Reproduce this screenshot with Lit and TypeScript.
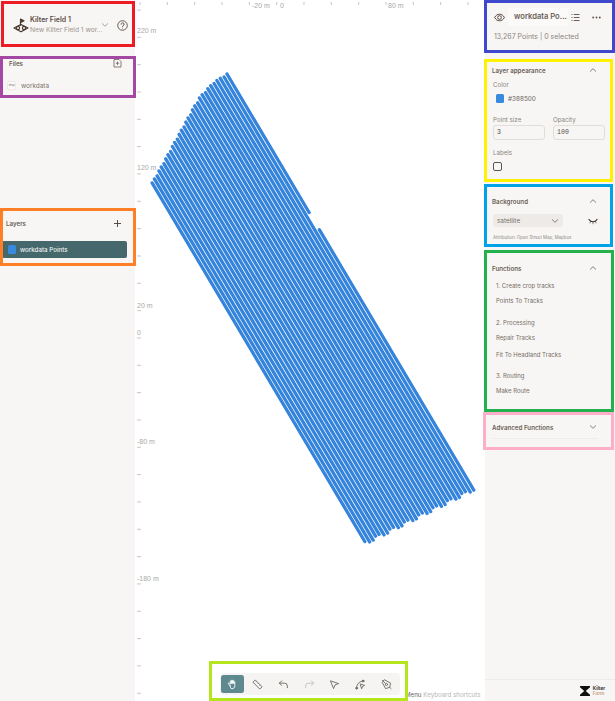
import { LitElement, html, css, svg } from "lit";
import { customElement } from "lit/decorators.js";

const chevron = (up: boolean) => html`<svg class="chev" viewBox="0 0 10 10"><path d=${up ? "M2.3 6.3 5 3.7 7.7 6.3" : "M2.3 3.7 5 6.3 7.7 3.7"} fill="none" stroke="currentColor" stroke-width=".8" stroke-linecap="round" stroke-linejoin="round"/></svg>`;

const NX = 0.86, NY = -0.51, AX = 0.51, AY = 0.86;
const stag: [number, number][] = [[0, 0], [16, 0.6], [35, 6], [46, 12], [100, 44], [120, 55.5]];
function sOf(d: number) {
  for (let i = 1; i < stag.length; i++) {
    if (d <= stag[i][0]) {
      const [a, b] = stag[i - 1];
      const [c, e] = stag[i];
      return b + ((d - a) / (c - a)) * (e - b);
    }
  }
  return 55.5;
}
function tracks() {
  const out = [];
  for (let i = 0; i <= 30; i++) {
    const d = i * 4;
    const bx = 227 - NX * d, by = 74 - NY * d;
    const s = sOf(d) + (i % 3 === 1 ? 1 : 0);
    const L = 484 - (9 * d) / 120 + (i % 4 < 2 ? 0 : -2.5);
    const p = (t: number) => `${(bx + AX * t).toFixed(1)} ${(by + AY * t).toFixed(1)}`;
    if (i === 0) {
      out.push(svg`<path d="M${p(s)}L${p(161)}M${p(181)}L${p(L)}"/>`);
    } else {
      out.push(svg`<path d="M${p(s)}L${p(L)}"/>`);
    }
  }
  return out;
}

const xTicks = Array.from({ length: 13 }, (_, i) => 140 + i * 27.33);
const yTicks = Array.from({ length: 26 }, (_, i) => 10 + i * 27.33);
const xLabels: [string, number][] = [["-20 m", 252], ["0", 280], ["80 m", 388]];
const yLabels: [string, number][] = [["220 m", 33], ["120 m", 170], ["20 m", 308], ["0", 335], ["-80 m", 444], ["-180 m", 581]];

@customElement("app-root")
export class AppRoot extends LitElement {
  static styles = css`
    :host { display: block; width: 615px; height: 701px; position: relative; overflow: hidden; background: #fff;
      font-family: "Inter", "Noto Sans", sans-serif; color: #6a625c; font-size: 6.2px; }
    .app { display: flex; height: 701px; }
    .left { width: 135px; flex: none; background: #f8f6f4; display: flex; flex-direction: column; }
    .map { flex: 1; position: relative; min-width: 0; }
    .map svg.canvas { display: block; width: 350px; height: 701px; }
    .right { width: 130px; flex: none; background: #f8f6f4; display: flex; flex-direction: column; border-bottom-right-radius: 4px; }

    .proj { height: 50px; display: flex; align-items: center; padding: 0 7px 0 13px; box-sizing: border-box; }
    .proj .logo { width: 16px; height: 15px; flex: none; color: #4a3b32; }
    .proj .names { margin-left: 1px; flex: 1; min-width: 0; }
    .proj .t { font-size: 7px; font-weight: 600; color: #5a4c44; line-height: 10px; }
    .proj .s { font-size: 6.6px; color: #98938e; line-height: 10px; white-space: nowrap; }
    .chev { width: 10px; height: 10px; flex: none; color: #6a625c; display: block; }
    .proj .chev { color: #8f8a85; }
    .help { width: 11px; height: 11px; margin-left: 7px; flex: none; color: #4a3b32; }

    .secHead { display: flex; align-items: center; justify-content: space-between; font-weight: 600; font-size: 6.2px; color: #6a5e56; }
    .files { padding: 8px 13px 0 9px; height: 160px; box-sizing: border-box; }
    .fileRow { display: flex; align-items: center; gap: 5px; margin: 13px 0 0 -2px; font-size: 6.4px; color: #7a736d; }
    .fileIcon { width: 9px; height: 9px; border-radius: 2px; background: #fdfcfb; border: 1px solid #ece9e6; box-sizing: border-box;
      font-size: 3.5px; text-align: center; line-height: 7px; color: #666; }
    .addIcon { width: 9px; height: 10px; color: #6a625c; display: block; }
    .layers { padding: 9px 0 0 2px; }
    .layers .secHead { padding: 0 13px 0 4px; }
    .plus { width: 9px; height: 9px; color: #4a3b32; display: block; }
    .layerRow { margin-top: 13px; width: 125px; height: 17px; background: #44686b; border-radius: 2px; display: flex; align-items: center;
      color: #eef2f2; font-size: 6.2px; font-weight: 500; padding-left: 6px; box-sizing: border-box; gap: 4px; }
    .sw { width: 8px; height: 9px; background: #388ade; border-radius: 1.5px; flex: none; }

    .lhead { height: 52px; box-sizing: border-box; padding: 8px 0 0 9px; }
    .lhead .top { display: flex; align-items: center; height: 18px; }
    .eye { width: 11px; height: 11px; color: #4a3b32; flex: none; display: block; }
    .lname { margin-left: 3px; width: 60px; height: 18px; box-sizing: border-box; padding-left: 6px; line-height: 18px; font-size: 7.6px; font-weight: 600; color: #6a5e56;
      background: #fbfaf8; border-radius: 3px; white-space: nowrap; }
    .ic { width: 9px; height: 9px; color: #5a4c44; display: block; flex: none; }
    .ic.list { margin-left: 3px; }
    .ic.dots { margin-left: 12px; }
    .count { margin-top: 6px; color: #8a837d; font-size: 7px; line-height: 10px; white-space: nowrap; }

    .sec { padding: 0 17px 0 7px; box-sizing: border-box; }
    .sec .secHead { height: 10px; }
    .appearance { height: 133px; padding-top: 13px; }
    .label { font-size: 6.2px; color: #8a837d; line-height: 10px; }
    .colorLabel { margin: 5px 0 0 1px; }
    .color { margin: 4px 0 0 4px; display: flex; align-items: center; gap: 4px; font-size: 6.4px; color: #6a625c; height: 9px; }
    .grid { display: grid; grid-template-columns: 52px 52px; column-gap: 8px; margin: 12px 0 0 1px; }
    .input { height: 15px; border: 1px solid #e0ddda; border-radius: 3px; box-sizing: border-box; padding-left: 3px; line-height: 13px;
      font-family: "Liberation Mono", monospace; font-size: 6.6px; color: #55504c; }
    .check { width: 9px; height: 9px; border: 1px solid #5a5550; border-radius: 2px; box-sizing: border-box; margin-top: 4px; }
    .labelsBox { margin: 8px 0 0 1px; }

    .bg { height: 66px; padding-top: 11px; }
    .bgRow { display: flex; align-items: center; margin: 8px 0 0 1px; }
    .select { width: 70px; height: 13px; background: #edeae7; border-radius: 3px; display: flex; align-items: center; justify-content: space-between;
      padding: 0 3px 0 4px; box-sizing: border-box; color: #7a736d; font-size: 6.4px; }
    .lash { width: 10px; height: 8px; margin-left: 25px; color: #3a2e26; display: block; flex: none; }
    .attr { margin: 8px 0 0 1px; font-size: 4.4px; color: #8f8a85; white-space: nowrap; line-height: 6px; }

    .fn { height: 160px; padding-top: 12px; }
    .fnList { padding-left: 4px; font-size: 6px; color: #756d67; white-space: nowrap; }
    .fnList div { height: 10px; line-height: 10px; }
    .fnList .g0 { margin-top: 8px; }
    .fnList .g1 { margin-top: 5px; }
    .fnList .g2 { margin-top: 12px; }
    .fnList .g3 { margin-top: 7px; }
    .fnList .g4 { margin-top: 11px; }
    .adv { padding-top: 11px; padding-right: 17px; }
    .adv .inner { padding-bottom: 6px; border-bottom: 1px solid #efedea; }
    .spacer { flex: 1; }
    .foot { height: 21px; border-top: 1px solid #ecebe8; display: flex; align-items: center; justify-content: flex-end; padding-right: 10px; gap: 3px; }
    .hour { width: 10px; height: 10px; display: block; }
    .kf { font-size: 4.6px; line-height: 5px; font-weight: 700; color: #333; }
    .kf span { display: block; }
    .kf .farm { color: #c9a98d; }

    .toolbar { position: absolute; left: 85px; top: 673px; width: 180px; height: 22px; background: #f6f4f2; border-radius: 4px;
      display: flex; align-items: center; padding-left: 1px; box-sizing: border-box; }
    .tool { width: 25.7px; height: 18px; display: flex; align-items: center; justify-content: center; color: #6f6a66; flex: none; }
    .tool svg { width: 11px; height: 11px; display: block; }
    .tool.on { width: 23px; background: #5e8a8f; color: #fff; border-radius: 2.5px; margin-right: 1px; }
    .tool.off { color: #c4c1be; }
    .hint { position: absolute; left: 270px; top: 690px; font-size: 6.2px; color: #b8b5b2; white-space: nowrap; line-height: 9px; }
    .hint b { font-weight: 400; color: #6a625c; }

    .ann { position: absolute; box-sizing: border-box; border: 3px solid; pointer-events: none; }
    .a1 { left: 1px; top: 1px; width: 134px; height: 46px; border-color: #ed1c24; }
    .a2 { left: 0; top: 56px; width: 136px; height: 42px; border-color: #a349a4; }
    .a3 { left: 0; top: 208px; width: 136px; height: 58px; border-color: #ff7f27; }
    .a4 { left: 484px; top: 0; width: 131px; height: 53px; border-color: #3f48cc; }
    .a5 { left: 484px; top: 59px; width: 129px; height: 123px; border-color: #fff200; }
    .a6 { left: 484px; top: 184px; width: 129px; height: 63px; border-color: #00a2e8; }
    .a7 { left: 484px; top: 250px; width: 130px; height: 162px; border-color: #22b14c; }
    .a8 { left: 483px; top: 412px; width: 131px; height: 38px; border-color: #ffaec9; }
    .a9 { left: 209px; top: 661px; width: 199px; height: 40px; border-color: #b5e61d; }
  `;

  render() {
    return html`<div class="app">
      <div class="left">
        <div class="proj">
          <svg class="logo" viewBox="0 0 16 15" fill="none" stroke="currentColor" stroke-width="1.2">
            <path d="M7.5 8V1l3.5 1.8-3.5 1.8" fill="currentColor" stroke-linejoin="round"/>
            <path d="M8 6.5 15 10 8 13.8 1 10Z" stroke-linejoin="round"/>
            <circle cx="5" cy="10" r="1.6"/><circle cx="11" cy="10" r="1.6"/>
          </svg>
          <div class="names"><div class="t">Kilter Field 1</div><div class="s">New Kilter Field 1 wor...</div></div>
          ${chevron(false)}
          <svg class="help" viewBox="0 0 12 12" fill="none" stroke="currentColor"><circle cx="6" cy="6" r="5.2" stroke-width=".9"/>
            <path d="M4.5 4.7A1.6 1.6 0 1 1 6.6 6.2C6.1 6.5 6 6.8 6 7.4" stroke-width=".9" stroke-linecap="round"/><circle cx="6" cy="9" r=".5" fill="currentColor" stroke="none"/></svg>
        </div>
        <div class="files">
          <div class="secHead">Files
            <svg class="addIcon" viewBox="0 0 9 10" fill="none" stroke="currentColor" stroke-width=".8"><path d="M1 1.5h5l2 2V9H1Z" stroke-linejoin="round"/><path d="M4.5 3.5v3.5M2.8 5.2h3.4"/></svg>
          </div>
          <div class="fileRow"><span class="fileIcon">shp</span>workdata</div>
        </div>
        <div class="layers">
          <div class="secHead">Layers
            <svg class="plus" viewBox="0 0 9 9" fill="none" stroke="currentColor" stroke-width=".9"><path d="M4.5 1v7M1 4.5h7"/></svg>
          </div>
          <div class="layerRow"><span class="sw"></span>workdata Points</div>
        </div>
      </div>

      <div class="map">
        <svg class="canvas" viewBox="135 0 350 701">
          <g stroke="#c8c8c8" stroke-width="1">
            ${xTicks.map((x) => svg`<line x1=${x} x2=${x} y1="2" y2="5"/>`)}
            ${yTicks.map((y) => svg`<line x1="137" x2="141" y1=${y} y2=${y}/>`)}
          </g>
          <g fill="#a8a8a8" font-family="Liberation Sans, Arial, sans-serif" font-size="7">
            ${xLabels.map(([t, x]) => svg`<text x=${x} y="7.5">${t}</text>`)}
            ${yLabels.map(([t, y]) => svg`<text x="137" y=${y}>${t}</text>`)}
          </g>
          <g fill="none" stroke="#3584dc" stroke-width="3.3" stroke-linecap="round">${tracks()}</g>
        </svg>
        <div class="toolbar">
          <div class="tool on"><svg viewBox="0 0 12 12" fill="none" stroke="currentColor" stroke-width="1" stroke-linejoin="round" stroke-linecap="round"><path d="M3.2 7 1.6 5.4c-.6-.7.3-1.5 1-.9L3.6 5.5V2.5c0-.9 1.2-.9 1.2 0V5 1.8c0-.9 1.3-.9 1.3 0V5 2.3c0-.9 1.2-.9 1.2 0V5 3.2c0-.8 1.2-.8 1.2 0v4c0 2.2-1.3 3.4-3 3.4S4 9.5 3.2 7Z"/></svg></div>
          <div class="tool"><svg viewBox="0 0 12 12" fill="none" stroke="currentColor" stroke-width="1" stroke-linejoin="round"><path d="M3.5 1 11 8.5 8.5 11 1 3.5Z"/><path d="M4 3.5 5 2.5M6 5.5l1-1M8 7.5l1-1" stroke-width=".7"/></svg></div>
          <div class="tool"><svg viewBox="0 0 12 12" fill="none" stroke="currentColor" stroke-width="1" stroke-linecap="round" stroke-linejoin="round"><path d="M4 2 1.5 4.5 4 7"/><path d="M1.5 4.5H7a3.2 3.2 0 0 1 3.2 3.2V9.5"/></svg></div>
          <div class="tool off"><svg viewBox="0 0 12 12" fill="none" stroke="currentColor" stroke-width="1" stroke-linecap="round" stroke-linejoin="round"><path d="M8 2l2.5 2.5L8 7"/><path d="M10.5 4.5H5A3.2 3.2 0 0 0 1.8 7.7V9.5"/></svg></div>
          <div class="tool"><svg viewBox="0 0 12 12" fill="none" stroke="currentColor" stroke-width="1" stroke-linejoin="round"><path d="M1.5 2 10.5 5 6.5 6.5 5 10.5Z"/></svg></div>
          <div class="tool"><svg viewBox="0 0 12 12" fill="none" stroke="currentColor" stroke-width="1" stroke-linecap="round" stroke-linejoin="round"><path d="M1.5 10C1.8 6 4.2 2.8 8 2.3"/><circle cx="8.8" cy="2.2" r="1" fill="currentColor"/><circle cx="1.8" cy="10" r="1" fill="currentColor"/><path d="M6 5.5 10.5 7 8.3 8 7.4 10.3Z"/></svg></div>
          <div class="tool"><svg viewBox="0 0 12 12" fill="none" stroke="currentColor" stroke-width="1" stroke-linejoin="round" stroke-linecap="round"><path d="M4 1 10.5 4.5 9.5 9 5 10.5 1.5 4Z"/><circle cx="6" cy="6" r="1.2"/><path d="M1.5 1.5 5 5M9.5 9 11 10.5"/></svg></div>
        </div>
        <div class="hint"><b>Menu</b> Keyboard shortcuts</div>
      </div>

      <div class="right">
        <div class="lhead">
          <div class="top">
            <svg class="eye" viewBox="0 0 12 12" fill="none" stroke="currentColor" stroke-width="1"><path d="M.7 6C2 3.4 4 2.4 6 2.4S10 3.4 11.3 6C10 8.6 8 9.6 6 9.6S2 8.6.7 6Z"/><circle cx="6" cy="6" r="2"/></svg>
            <div class="lname">workdata Po...</div>
            <svg class="ic list" viewBox="0 0 9 9" fill="none" stroke="currentColor" stroke-width=".9"><path d="M2.8 1.5H8.5M2.8 4.5H8.5M2.8 7.5H8.5M.5 1.5h1M.5 4.5h1M.5 7.5h1"/></svg>
            <svg class="ic dots" viewBox="0 0 9 9" fill="currentColor"><circle cx="1.2" cy="4.5" r=".9"/><circle cx="4.5" cy="4.5" r=".9"/><circle cx="7.8" cy="4.5" r=".9"/></svg>
          </div>
          <div class="count">13,267 Points | 0 selected</div>
        </div>

        <div class="sec appearance">
          <div class="secHead">Layer appearance ${chevron(true)}</div>
          <div class="label colorLabel">Color</div>
          <div class="color"><span class="sw"></span>#388500</div>
          <div class="grid">
            <div><div class="label">Point size</div><div class="input">3</div></div>
            <div><div class="label">Opacity</div><div class="input">100</div></div>
          </div>
          <div class="labelsBox"><div class="label">Labels</div><div class="check"></div></div>
        </div>

        <div class="sec bg">
          <div class="secHead">Background ${chevron(true)}</div>
          <div class="bgRow">
            <div class="select">satellite ${chevron(false)}</div>
            <svg class="lash" viewBox="0 0 10 8" fill="none" stroke="currentColor" stroke-width="1.2" stroke-linecap="round"><path d="M1 2.5C3 5.5 7 5.5 9 2.5"/><path d="M2.5 4.5 2 6M5 5.2V6.8M7.5 4.5 8 6" stroke-width=".6"/></svg>
          </div>
          <div class="attr">Attribution: Open Street Map, Mapbox</div>
        </div>

        <div class="sec fn">
          <div class="secHead">Functions ${chevron(true)}</div>
          <div class="fnList">
            <div class="g0">1. Create crop tracks</div>
            <div class="g1">Points To Tracks</div>
            <div class="g2">2. Processing</div>
            <div class="g1">Repair Tracks</div>
            <div class="g3">Fit To Headland Tracks</div>
            <div class="g4">3. Routing</div>
            <div class="g1">Make Route</div>
          </div>
        </div>

        <div class="sec adv"><div class="inner"><div class="secHead">Advanced Functions ${chevron(false)}</div></div></div>
        <div class="spacer"></div>
        <div class="foot">
          <svg class="hour" viewBox="0 0 9 9"><path d="M0 0H9V1.2L5.2 4.5 9 7.8V9H0V7.8L3.8 4.5 0 1.2Z" fill="#111"/></svg>
          <div class="kf"><span>Kilter</span><span class="farm">Farm</span></div>
        </div>
      </div>
    </div>
    ${[1, 2, 3, 4, 5, 6, 7, 8, 9].map((n) => html`<div class="ann a${n}"></div>`)}`;
  }
}
